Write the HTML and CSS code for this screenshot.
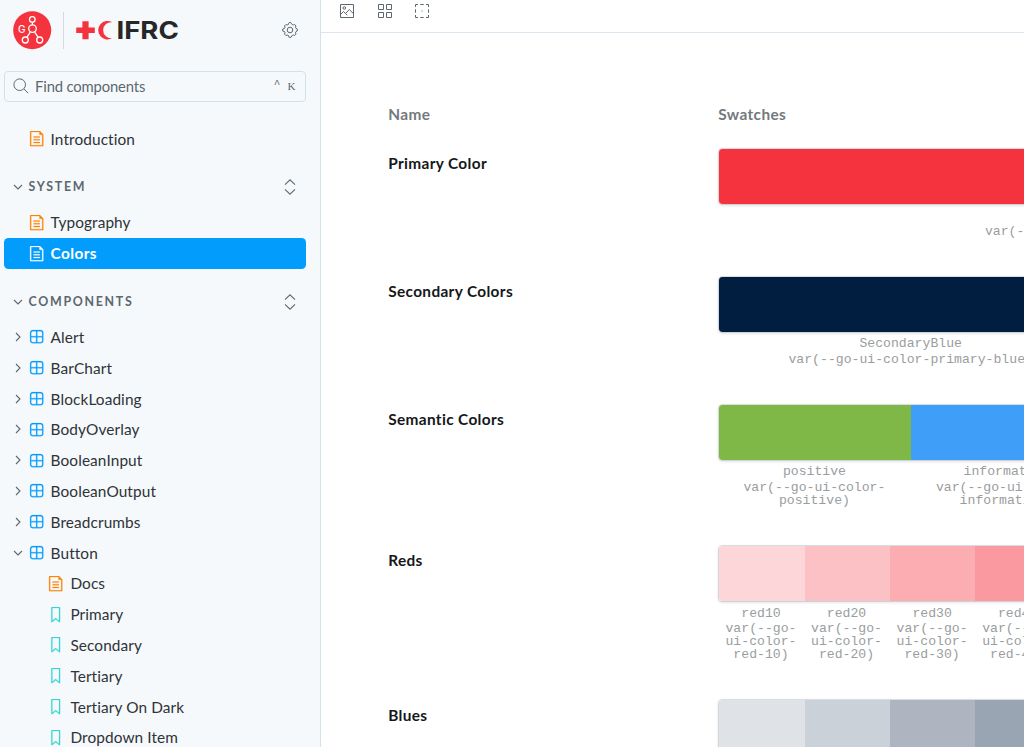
FILE: index.html
```html
<!DOCTYPE html>
<html lang="en">
<head>
    <meta charset="UTF-8">
    <meta name="viewport" content="width=device-width, initial-scale=1.0">
    <title>System / Colors - GO UI Storybook</title>
    <link rel="stylesheet" href="styles.css">
</head>
<body>
    <!-- Icon sprite -->
    <svg class="sprite" aria-hidden="true">
        <symbol id="document" viewBox="0 0 14 14">
            <path d="M4 5.5a.5.5 0 01.5-.5h5a.5.5 0 010 1h-5a.5.5 0 01-.5-.5zM4.5 7.5a.5.5 0 000 1h5a.5.5 0 000-1h-5zM4 10.5a.5.5 0 01.5-.5h5a.5.5 0 010 1h-5a.5.5 0 01-.5-.5z"/>
            <path fill-rule="evenodd" d="M1.5 0a.5.5 0 00-.5.5v13a.5.5 0 00.5.5h11a.5.5 0 00.5-.5V3.207a.5.5 0 00-.146-.353L10.146.146A.5.5 0 009.793 0H1.5zM2 1h7.5v2a.5.5 0 00.5.5h2V13H2V1z"/>
        </symbol>
        <symbol id="component" viewBox="0 0 14 14">
            <path fill-rule="evenodd" d="M3.5 1.004a2.5 2.5 0 00-2.5 2.5v7a2.5 2.5 0 002.5 2.5h7a2.5 2.5 0 002.5-2.5v-7a2.5 2.5 0 00-2.5-2.5h-7zm8.5 5.5H7.5v-4.5h3a1.5 1.5 0 011.5 1.5v3zm0 1v3a1.5 1.5 0 01-1.5 1.5h-3v-4.5H12zm-5.5 4.5v-4.5H2v3a1.5 1.5 0 001.5 1.5h3zM2 6.504h4.5v-4.5h-3a1.5 1.5 0 00-1.5 1.5v3z"/>
        </symbol>
        <symbol id="bookmark" viewBox="0 0 14 14">
            <path fill-rule="evenodd" d="M3.5 0h7a.5.5 0 01.5.5v13a.5.5 0 01-.454.498.462.462 0 01-.371-.118L7 11.159l-3.175 2.72a.46.46 0 01-.379.118A.5.5 0 013 13.5V.5a.5.5 0 01.5-.5zM4 12.413l2.664-2.284a.454.454 0 01.377-.128.498.498 0 01.284.12L10 12.412V1H4v11.413z"/>
        </symbol>
        <symbol id="chevron" viewBox="0 0 10 10">
            <path class="line" d="M3 1l4 4-4 4"/>
        </symbol>
        <symbol id="expand" viewBox="0 0 14 16">
            <path class="line" d="M2 5.6l5-4.8 5 4.8M2 10.4l5 4.8 5-4.8"/>
        </symbol>
    </svg>

    <aside class="sidebar">
        <header class="brand">
            <svg class="brand-logo" viewBox="0 0 170 40">
                <circle class="go-bg" cx="19.2" cy="19.2" r="19"/>
                <g class="go-lines">
                    <circle cx="19.3" cy="8.4" r="2.8"/>
                    <circle cx="19.5" cy="17.6" r="3.8"/>
                    <circle cx="12.3" cy="29" r="3"/>
                    <circle cx="26.7" cy="29" r="3"/>
                    <path d="M19.4 11.4v2.4M17.4 20.9l-3.5 5.4M21.6 20.9l3.5 5.4"/>
                </g>
                <text class="go-text" x="5" y="21.8" textLength="8">G</text>
                <path class="divider" d="M50.5 1v37"/>
                <path class="red" d="M69.4 10.3h6.2v6.2h6.2v5.6h-6.2v6.2h-6.2v-6.2h-6.2v-5.6h6.2z"/>
                <path class="red" d="M99.4 11.3a9.3 9.3 0 100 15.8a8 8 0 110-15.8z"/>
                <text class="ifrc" x="103.4" y="28.2" textLength="62.5" lengthAdjust="spacingAndGlyphs">IFRC</text>
            </svg>
            <svg class="gear" viewBox="0 0 16 16">
                <circle cx="8" cy="8" r="2.8"/>
                <path d="M6.5 1.5L7 .7h2l.5.8.7 1.1 1.1.4 1.3-.5 1.4 1.4-.5 1.3.4 1.1 1.4.7v2l-1.4.7-.4 1.1.5 1.3-1.4 1.4-1.3-.5-1.1.4L9 15.3H7l-.7-1.9-1.1-.4-1.3.5-1.4-1.4.5-1.3-.4-1.1L.7 9V7l1.9-.7.4-1.1-.5-1.3 1.4-1.4 1.3.5 1.1-.4z"/>
            </svg>
        </header>

        <div class="search">
            <svg class="search-icon" viewBox="0 0 16 16">
                <circle cx="6.7" cy="6.7" r="5.8"/>
                <path d="M11 11l4.2 4.2"/>
            </svg>
            <span class="search-label">Find components</span>
            <span class="shortcut"><kbd>^</kbd><kbd>K</kbd></span>
        </div>

        <nav class="tree">
            <a class="item"><svg class="icon doc"><use href="#document"/></svg>Introduction</a>

            <div class="heading">
                <svg class="arrow open"><use href="#chevron"/></svg>
                <span>SYSTEM</span>
                <svg class="expand"><use href="#expand"/></svg>
            </div>
            <a class="item"><svg class="icon doc"><use href="#document"/></svg>Typography</a>
            <a class="item selected"><svg class="icon doc"><use href="#document"/></svg>Colors</a>

            <div class="heading">
                <svg class="arrow open"><use href="#chevron"/></svg>
                <span>COMPONENTS</span>
                <svg class="expand"><use href="#expand"/></svg>
            </div>
            <a class="item"><svg class="arrow"><use href="#chevron"/></svg><svg class="icon comp"><use href="#component"/></svg>Alert</a>
            <a class="item"><svg class="arrow"><use href="#chevron"/></svg><svg class="icon comp"><use href="#component"/></svg>BarChart</a>
            <a class="item"><svg class="arrow"><use href="#chevron"/></svg><svg class="icon comp"><use href="#component"/></svg>BlockLoading</a>
            <a class="item"><svg class="arrow"><use href="#chevron"/></svg><svg class="icon comp"><use href="#component"/></svg>BodyOverlay</a>
            <a class="item"><svg class="arrow"><use href="#chevron"/></svg><svg class="icon comp"><use href="#component"/></svg>BooleanInput</a>
            <a class="item"><svg class="arrow"><use href="#chevron"/></svg><svg class="icon comp"><use href="#component"/></svg>BooleanOutput</a>
            <a class="item"><svg class="arrow"><use href="#chevron"/></svg><svg class="icon comp"><use href="#component"/></svg>Breadcrumbs</a>
            <a class="item"><svg class="arrow open"><use href="#chevron"/></svg><svg class="icon comp"><use href="#component"/></svg>Button</a>
            <a class="item child"><svg class="icon doc"><use href="#document"/></svg>Docs</a>
            <a class="item child"><svg class="icon story"><use href="#bookmark"/></svg>Primary</a>
            <a class="item child"><svg class="icon story"><use href="#bookmark"/></svg>Secondary</a>
            <a class="item child"><svg class="icon story"><use href="#bookmark"/></svg>Tertiary</a>
            <a class="item child"><svg class="icon story"><use href="#bookmark"/></svg>Tertiary On Dark</a>
            <a class="item child"><svg class="icon story"><use href="#bookmark"/></svg>Dropdown Item</a>
        </nav>
    </aside>

    <main class="main">
        <div class="toolbar">
            <svg class="tool" viewBox="0 0 14 14">
                <path d="M.5.5h13v13H.5zM.8 10.2l2.7-2.7 2 2L9.3 5.5l4.2 4.2M5.5 9.5l1.8 1.8"/>
                <circle cx="4.3" cy="4" r="1.3"/>
            </svg>
            <svg class="tool" viewBox="0 0 14 14">
                <path d="M.5.5h5v5h-5zM8.5.5h5v5h-5zM.5 8.5h5v5h-5zM8.5 8.5h5v5h-5z"/>
            </svg>
            <svg class="tool" viewBox="0 0 14 14">
                <path d="M.5 3V.5H3M5.3.5h3.4M11 .5h2.5V3M13.5 5.3v3.4M13.5 11v2.5H11M8.7 13.5H5.3M3 13.5H.5V11M.5 8.7V5.3M6.5 7h1"/>
            </svg>
        </div>

        <div class="palette">
            <div class="palette-row palette-head">
                <div>Name</div>
                <div>Swatches</div>
            </div>

            <div class="palette-row">
                <h2 class="title">Primary Color</h2>
                <div>
                    <div class="swatches"><i class="red-primary"></i></div>
                    <div class="labels">
                        <div>PrimaryRed<span>var(--go-ui-color-primary-red)</span></div>
                    </div>
                </div>
            </div>

            <div class="palette-row">
                <h2 class="title">Secondary Colors</h2>
                <div>
                    <div class="swatches"><i class="blue-primary"></i><i class="blue-primary"></i></div>
                    <div class="labels">
                        <div>SecondaryBlue<span>var(--go-ui-color-primary-blue)</span></div>
                        <div></div>
                    </div>
                </div>
            </div>

            <div class="palette-row">
                <h2 class="title">Semantic Colors</h2>
                <div>
                    <div class="swatches"><i class="positive"></i><i class="information"></i><i></i><i></i></div>
                    <div class="labels">
                        <div>positive<span>var(--go-ui-color-positive)</span></div>
                        <div>information<span>var(--go-ui-color-information)</span></div>
                        <div></div>
                        <div></div>
                    </div>
                </div>
            </div>

            <div class="palette-row">
                <h2 class="title">Reds</h2>
                <div>
                    <div class="swatches"><i class="red10"></i><i class="red20"></i><i class="red30"></i><i class="red40"></i><i></i><i></i><i></i><i></i><i></i></div>
                    <div class="labels">
                        <div>red10<span>var(--go-ui-color-red-10)</span></div>
                        <div>red20<span>var(--go-ui-color-red-20)</span></div>
                        <div>red30<span>var(--go-ui-color-red-30)</span></div>
                        <div>red40<span>var(--go-ui-color-red-40)</span></div>
                        <div></div><div></div><div></div><div></div><div></div>
                    </div>
                </div>
            </div>

            <div class="palette-row">
                <h2 class="title">Blues</h2>
                <div>
                    <div class="swatches"><i class="blue10"></i><i class="blue20"></i><i class="blue30"></i><i class="blue40"></i><i></i><i></i><i></i><i></i><i></i></div>
                </div>
            </div>
        </div>
    </main>
</body>
</html>
```
FILE: styles.css
```css
:root {
    --bg: #f6f9fc;
    --text: #2e3438;
    --muted: #5c6870;
    --border: #d5e1ea;
    --blue: #029cfd;
    --orange: #ff8300;
    --teal: #37d5d3;
    --red: #f5333f;
}

* {
    margin: 0;
    padding: 0;
    box-sizing: border-box;
}

body {
    display: flex;
    height: 100vh;
    overflow: hidden;
    background: var(--bg);
    color: var(--text);
    font: 15.4px/20px Lato, "Open Sans", sans-serif;
}

svg {
    flex: none;
    overflow: visible;
}

.sprite {
    position: absolute;
    width: 0;
    height: 0;
}

/* Sidebar */
.sidebar {
    flex: none;
    width: 321px;
    padding: 11px 13.6px 0 4.4px;
    border-right: 1px solid var(--border);
}

.brand {
    display: flex;
    align-items: center;
    justify-content: space-between;
    padding: 0 8px 0 8.6px;
    height: 39px;
}

.brand-logo {
    width: 170px;
    height: 40px;
}

.go-bg, .red {
    fill: var(--red);
}

.go-lines {
    fill: none;
    stroke: #fff;
    stroke-width: 1.3;
}

.go-text {
    fill: #fff;
    font: 500 10px Inter, sans-serif;
}

.divider {
    stroke: #d3d9de;
}

.ifrc {
    fill: #272727;
    font: 700 24.5px Inter, sans-serif;
}

.gear, .search-icon {
    width: 16px;
    height: 16px;
    fill: none;
    stroke: var(--muted);
}

.gear {
    margin-bottom: 1px;
}

.search {
    display: flex;
    align-items: center;
    height: 31px;
    margin-top: 20.5px;
    padding: 0 10px 1px 8px;
    border: 1px solid var(--border);
    border-radius: 4px;
    color: var(--muted);
}

.search-label {
    margin-left: 5.7px;
    font-size: 14.8px;
    letter-spacing: -0.15px;
}

.shortcut {
    display: flex;
    gap: 7px;
    margin-left: auto;
}

kbd {
    font: 11px/16px "Liberation Serif", serif;
}

kbd:first-child {
    font-family: "Liberation Mono", monospace;
    line-height: 12px;
}

.tree {
    margin-top: 21.8px;
}

.item {
    display: flex;
    align-items: center;
    height: 30.8px;
    padding-left: 24.2px;
    border-radius: 4.4px;
    letter-spacing: 0.1px;
}

.icon {
    width: 15.4px;
    height: 15.4px;
    margin-right: 6.6px;
}

.arrow {
    width: 10px;
    height: 10px;
    margin: 0 6px 0 -16px;
}

.arrow.open {
    transform: rotate(90deg);
}

.line {
    fill: none;
    stroke: var(--muted);
    stroke-width: 1.1;
}

.doc {
    fill: var(--orange);
    stroke: var(--orange);
    stroke-width: 0.2;
}

.comp {
    fill: var(--blue);
    stroke: var(--blue);
    stroke-width: 0.2;
}

.story {
    fill: var(--teal);
    stroke: var(--teal);
    stroke-width: 0.2;
}

.child {
    padding-left: 44px;
}

.selected {
    background: var(--blue);
    color: #fff;
    font-weight: 700;
    letter-spacing: 0.4px;
}

.selected .doc {
    fill: #fff;
    stroke: #fff;
}

.heading {
    display: flex;
    align-items: center;
    height: 30.8px;
    margin: 17.6px 0 4.6px;
    padding-left: 24.2px;
    color: var(--muted);
    font-size: 12.4px;
    font-weight: 700;
    letter-spacing: 1.7px;
}

.expand {
    width: 14px;
    height: 16px;
    margin: 0 9px 0 auto;
}

/* Canvas */
.main {
    flex: 1;
    min-width: 0;
    overflow: hidden;
    background: #fff;
}

.toolbar {
    display: flex;
    align-items: center;
    gap: 23.5px;
    height: 33px;
    padding: 0 0 9.4px 19px;
    border-bottom: 1px solid #dde6ed;
}

.tool {
    width: 14px;
    height: 14px;
    fill: none;
    stroke: var(--muted);
}

.palette {
    width: 1100px;
    margin: 70.6px 0 0 67.2px;
}

.palette-row {
    display: grid;
    grid-template-columns: 330px 770px;
    margin-bottom: 37.6px;
}

.palette-head {
    height: 20px;
    margin-bottom: 24px;
    color: #74797d;
    font-weight: 700;
    letter-spacing: 0.4px;
}

.title {
    padding-top: 5.4px;
    color: #15181a;
    font-size: 15.4px;
    line-height: 20px;
    letter-spacing: 0.35px;
}

.swatches {
    display: flex;
    height: 57px;
    overflow: hidden;
    border: 1px solid rgba(38, 85, 115, 0.15);
    border-radius: 4.4px;
    background: #fff;
    background-clip: padding-box;
    box-shadow: 0 1px 3px rgba(0, 0, 0, 0.1);
}

.swatches i {
    flex: 1;
}

.labels {
    display: flex;
    padding-top: 4.8px;
    color: #999da0;
    font: 13.15px/13.2px "Liberation Mono", monospace;
    text-align: center;
}

.labels div {
    flex: 1;
    min-width: 0;
}

.labels span {
    display: block;
    margin-top: 2.2px;
}

.red-primary { background: #f5333f; }
.blue-primary { background: #011e41; }
.positive { background: #7fb847; }
.information { background: #3f9ff8; }
.red10 { background: #fcd6d9; }
.red20 { background: #fbc1c5; }
.red30 { background: #fbadb2; }
.red40 { background: #fa999f; }
.blue10 { background: #dfe2e6; }
.blue20 { background: #cad1d8; }
.blue30 { background: #aeb5c0; }
.blue40 { background: #99a5b3; }
```
